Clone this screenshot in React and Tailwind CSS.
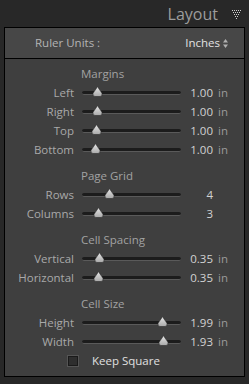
import React from 'react';

const font = { fontFamily: '"Open Sans", "DejaVu Sans", sans-serif' };

const Thumb = ({ pos }) => (
  <svg
    className="absolute top-[-5px]"
    style={{ left: pos - 5.5 }}
    width="11"
    height="11"
    viewBox="0 0 11 11"
  >
    <defs>
      <linearGradient id="tg" x1="0" y1="0" x2="0" y2="1">
        <stop offset="0" stopColor="#e8e8e8" />
        <stop offset="1" stopColor="#a8a8a8" />
      </linearGradient>
    </defs>
    <path d="M5.5 0.5 C6.5 2.5 9 5.5 10 7.5 Q10.5 10.5 8 10.5 L3 10.5 Q0.5 10.5 1 7.5 C2 5.5 4.5 2.5 5.5 0.5 Z" fill="url(#tg)" stroke="#2a2a2a" strokeWidth="0.6" />
  </svg>
);

const SliderRow = ({ label, value, unit, pos }) => (
  <div className="flex items-center h-[19px]">
    <div className="w-[69px] text-right text-[11.5px] text-[#a9a9a9]">{label}</div>
    <div className="relative ml-[8px] w-[99px] h-[4px] rounded-full bg-[#1c1c1c] border-b border-[#5a5a5a]">
      <Thumb pos={pos} />
    </div>
    <div className="w-[32px] text-right text-[11.5px] text-[#d2d2d2]">{value}</div>
    {unit && <div className="ml-[5px] text-[11.5px] text-[#9a9a9a]">{unit}</div>}
  </div>
);

const Section = ({ title, first }) => (
  <div className={`h-[19px] flex items-center pl-[76px] text-[11.5px] text-[#a2a2a2] ${first ? '' : 'mt-[7px]'}`}>
    {title}
  </div>
);

const Dots = () => {
  const rows = [5, 4, 3, 2, 1];
  return (
    <svg width="10" height="10" viewBox="0 0 10 10" className="ml-[14px] mr-[7px] mt-[2px]">
      {rows.map((n, r) =>
        Array.from({ length: n }).map((_, i) => (
          <rect key={`${r}-${i}`} x={r + i * 2} y={r * 2} width="1" height="1" fill="#cfcfcf" />
        ))
      )}
    </svg>
  );
};

export default function App() {
  return (
    <div className="w-[249px] h-[384px] bg-[#282828] overflow-hidden" style={font}>
      <div className="h-[27px] flex items-center justify-end">
        <span className="text-[16px] text-[#9c9c9c] leading-none">Layout</span>
        <Dots />
      </div>
      <div className="mx-[4px] border border-black bg-[#3f3f3f]">
        <div className="h-[31px] flex items-center bg-[#474747] border-b border-black">
          <span className="ml-[30px] text-[11.5px] text-[#b4b4b4]">Ruler Units :</span>
          <span className="ml-auto text-[11.5px] text-[#e2e2e2]">Inches</span>
          <svg width="5" height="9" viewBox="0 0 5 9" className="ml-[3px] mr-[16px]">
            <path d="M2.5 0 L5 3.5 L0 3.5 Z" fill="#b0b0b0" />
            <path d="M2.5 9 L5 5.5 L0 5.5 Z" fill="#b0b0b0" />
          </svg>
        </div>
        <div className="pt-[5px] pb-[6px]">
          <Section title="Margins" first />
          <SliderRow label="Left" value="1.00" unit="in" pos={15} />
          <SliderRow label="Right" value="1.00" unit="in" pos={15} />
          <SliderRow label="Top" value="1.00" unit="in" pos={14} />
          <SliderRow label="Bottom" value="1.00" unit="in" pos={13} />
          <Section title="Page Grid" />
          <SliderRow label="Rows" value="4" pos={27} />
          <SliderRow label="Columns" value="3" pos={16} />
          <Section title="Cell Spacing" />
          <SliderRow label="Vertical" value="0.35" unit="in" pos={17} />
          <SliderRow label="Horizontal" value="0.35" unit="in" pos={16} />
          <Section title="Cell Size" />
          <SliderRow label="Height" value="1.99" unit="in" pos={80} />
          <SliderRow label="Width" value="1.93" unit="in" pos={81} />
          <div className="h-[19px] flex items-center">
            <div className="ml-[63px] w-[10px] h-[10px] bg-[#2e2e2e] border border-[#1a1a1a] shadow-[0_0_0_1px_#555]" />
            <span className="ml-[14px] text-[11.5px] text-[#e0e0e0]">Keep Square</span>
          </div>
        </div>
      </div>
    </div>
  );
}
